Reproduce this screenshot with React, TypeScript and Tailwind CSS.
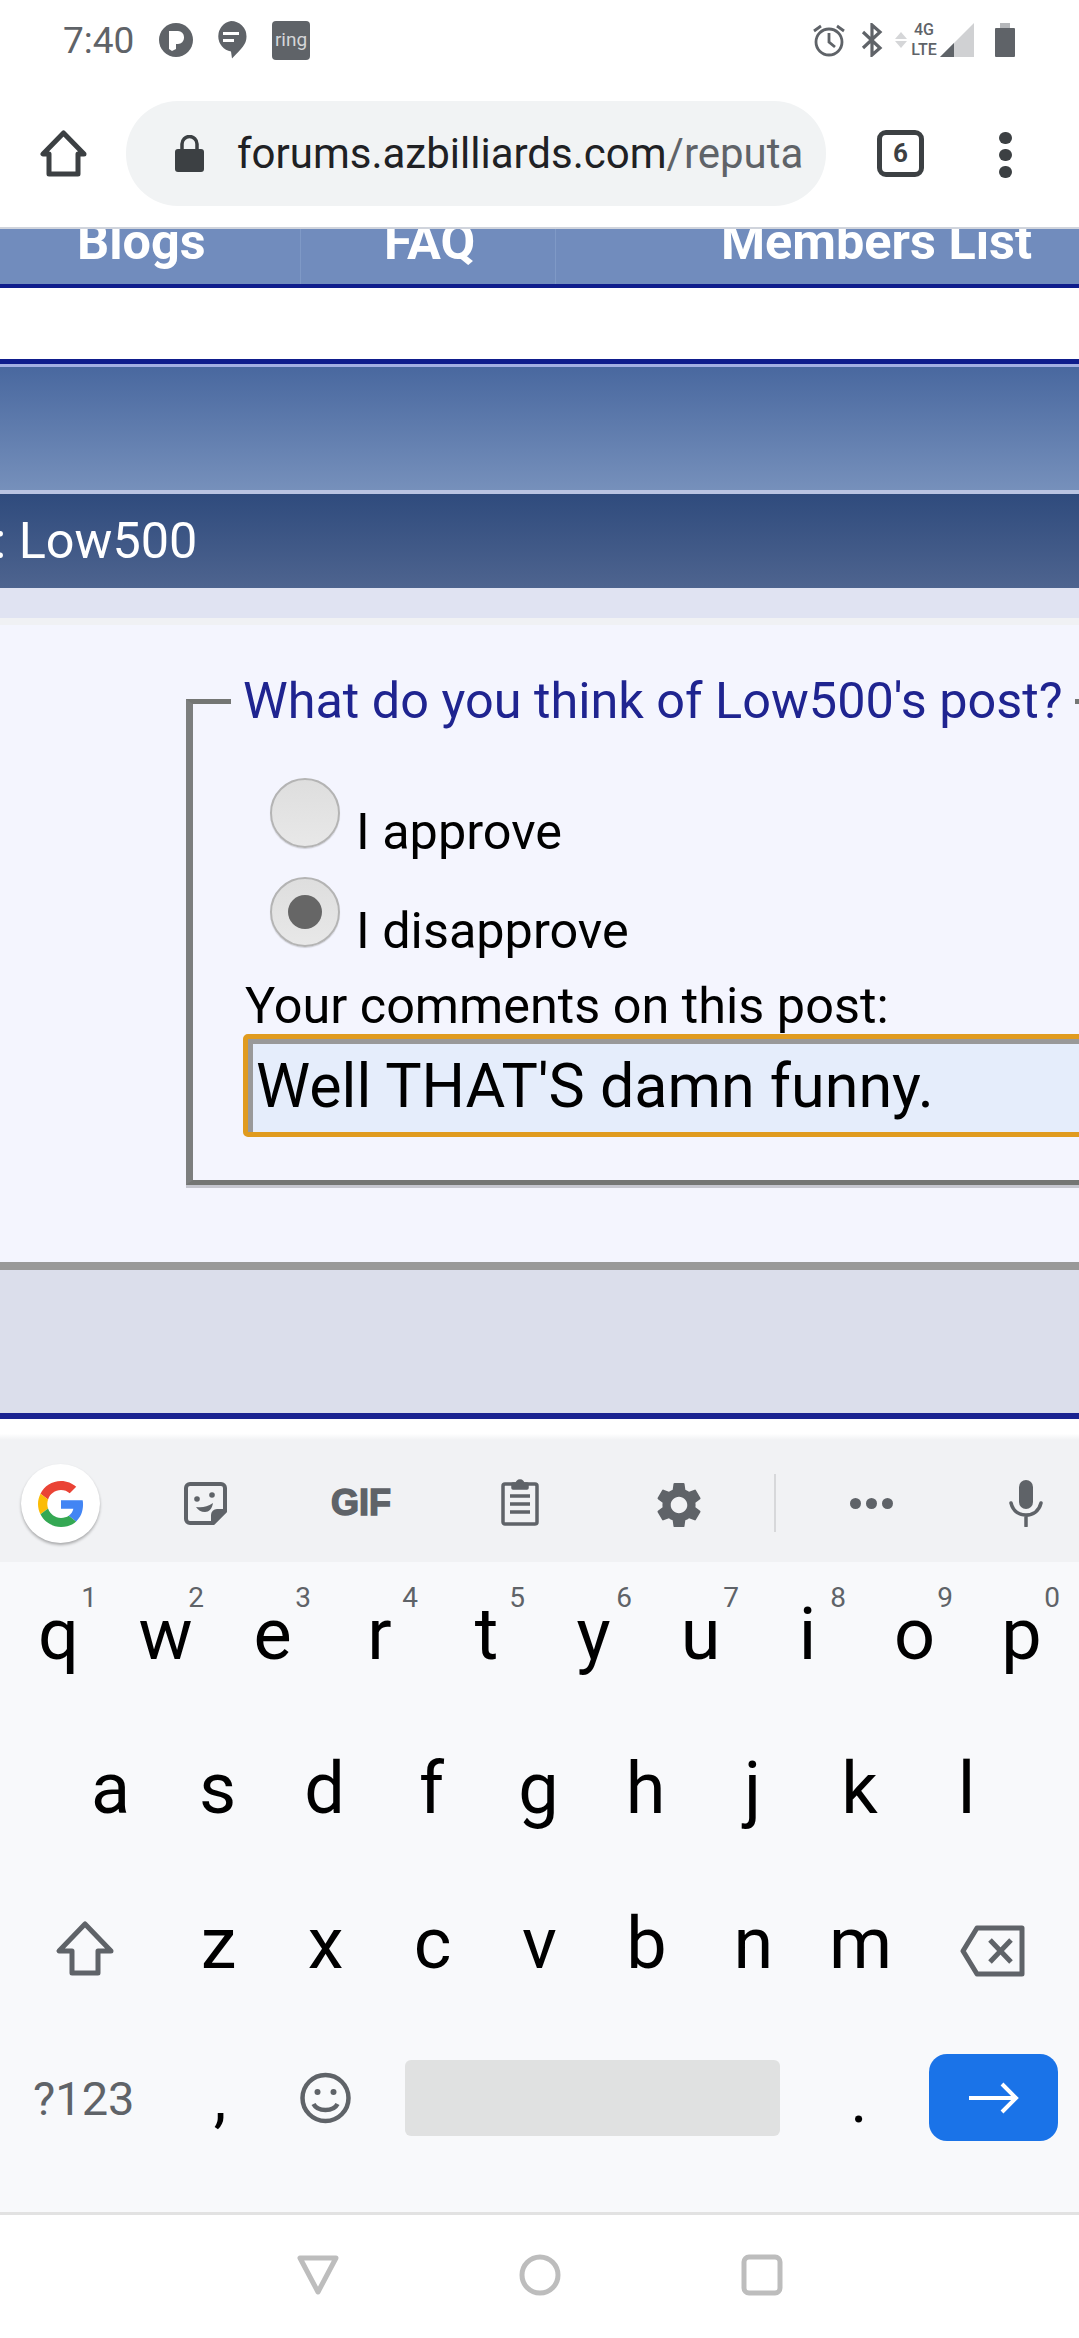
const sans = "font-['Liberation_Sans',Arial,sans-serif]"
const roboto = "font-['Roboto',sans-serif]"

const topRow = [
  ["q", "1"], ["w", "2"], ["e", "3"], ["r", "4"], ["t", "5"],
  ["y", "6"], ["u", "7"], ["i", "8"], ["o", "9"], ["p", "0"],
]
const midRow = ["a", "s", "d", "f", "g", "h", "j", "k", "l"]
const lowRow = ["z", "x", "c", "v", "b", "n", "m"]

function StatusBar() {
  return (
    <div className="h-[90px] flex items-center justify-between pl-[63px] pr-[64px] pb-[10px] text-[#5f6368]">
      <div className="flex items-center">
        <span className={`${roboto} text-[37px] leading-none w-[96px]`}>7:40</span>
        <svg viewBox="0 0 34 34" className="w-[34px] h-[34px]">
          <circle cx="17" cy="17" r="17" fill="#5f6368" />
          <path d="M10 8h9a6 6 0 0 1 6 6v1a6 6 0 0 1-6 6h-2v5l-4 2-3-2z" fill="#fff" />
        </svg>
        <svg viewBox="0 0 32 38" className="w-[32px] h-[38px] ml-[22px]">
          <path d="M16 0a15.500 15.500 0 0 1 15.500 15.500c0 8-5 12-14.500 22l-1-7A15.500 15.500 0 0 1 16 0z" fill="#5f6368" />
          <rect x="8" y="11" width="16" height="3" fill="#fff" />
          <rect x="8" y="18" width="11" height="3" fill="#fff" />
        </svg>
        <span className={`${roboto} ml-[25px] w-[38px] h-[39px] rounded-[4px] bg-[#5f6368] text-[#d5d6d8] text-[19px] flex items-center justify-center`}>
          ring
        </span>
      </div>
      <div className="flex items-center">
        <svg viewBox="0 0 34 34" fill="none" stroke="#5f6368" strokeWidth="2.800" className="w-[34px] h-[34px]">
          <circle cx="17" cy="19" r="13" />
          <path d="M17 10v9l6 5M2 8l7-5M32 8l-7-5" />
        </svg>
        <svg viewBox="0 0 22 34" fill="none" stroke="#5f6368" strokeWidth="3.200" className="w-[22px] h-[34px] ml-[15px]">
          <path d="M2 9l17 16-8 7V2l8 7L2 25" />
        </svg>
        <svg viewBox="0 0 12 16" className="w-[12px] h-[16px] ml-[12px]">
          <path d="M6 0l6 7H0z" fill="#d5d6d8" />
          <path d="M6 16l6-7H0z" fill="#d5d6d8" />
        </svg>
        <div className={`${roboto} ml-[4px] w-[26px] text-[16px] leading-[20px] font-medium text-center`}>
          <div>4G</div>
          <div>LTE</div>
        </div>
        <svg viewBox="0 0 34 34" className="w-[34px] h-[34px] ml-[3px]">
          <path d="M34 0v34H0z" fill="#d0d1d3" />
          <path d="M14 20v14H0z" fill="#5f6368" />
        </svg>
        <svg viewBox="0 0 20 34" className="w-[20px] h-[34px] ml-[21px]">
          <rect x="5" y="0" width="10" height="5" fill="#b5b7ba" />
          <rect x="0" y="5" width="20" height="29" rx="1" fill="#5f6368" />
        </svg>
      </div>
    </div>
  )
}

function BrowserBar() {
  return (
    <div className="h-[137px] flex items-start pl-[40px]">
      <svg viewBox="0 0 47 47" fill="none" stroke="#3c4043" strokeWidth="5" strokeLinejoin="round" className="w-[47px] h-[47px] mt-[40px]">
        <path d="M23.500 3L3 24h6v20h29V24h6z" />
      </svg>
      <div className="w-[700px] h-[105px] ml-[39px] mt-[11px] rounded-[52px] bg-[#f1f3f4] flex items-center pl-[49px]">
        <svg viewBox="0 0 29 37" className="w-[29px] h-[37px]">
          <path d="M7 15V9a7.500 7.500 0 0 1 15 0v6" fill="none" stroke="#3c4043" strokeWidth="3.500" />
          <rect x="0" y="14" width="29" height="23" rx="3" fill="#3c4043" />
        </svg>
        <span className={`${roboto} ml-[33px] text-[42px] leading-none text-[#202124] whitespace-nowrap`}>
          forums.azbilliards.com<span className="text-[#5f6368]">/reputa</span>
        </span>
      </div>
      <div className={`${roboto} ml-[51px] mt-[40px] w-[47px] h-[47px] rounded-[9px] border-[5px] border-[#3c4043] flex items-center justify-center text-[26px] font-bold text-[#3c4043]`}>
        6
      </div>
      <div className="ml-[75px] mt-[42px] flex flex-col gap-[5px]">
        <span className="w-[13px] h-[12px] rounded-full bg-[#3c4043]" />
        <span className="w-[13px] h-[12px] rounded-full bg-[#3c4043]" />
        <span className="w-[13px] h-[12px] rounded-full bg-[#3c4043]" />
      </div>
    </div>
  )
}

function Radio({ checked, label }: { checked?: boolean; label: string }) {
  return (
    <div className="flex items-end h-[99px] pl-[77px]">
      <div className="mb-[11px] w-[70px] h-[70px] rounded-full border-2 border-[#b4b4b4] bg-gradient-to-b from-[#dedede] to-[#e8e8e8] shadow-[0_1px_1px_rgba(0,0,0,0.15)] flex items-center justify-center">
        {checked && <span className="w-[34px] h-[34px] rounded-full bg-[#666666]" />}
      </div>
      <span className="ml-[16px] text-[50.400px] leading-[54px] text-black">{label}</span>
    </div>
  )
}

function Forum() {
  return (
    <div className={`${roboto} overflow-hidden`}>
      {/* Clipped tab row of the forum's nav */}
      <div className="h-[61px] overflow-hidden border-t-2 border-[#d0d4dc] border-b-[4px] border-b-[#0f1d8c] bg-[#718cbd] flex text-white font-bold text-[50.400px] leading-none">
        <div className="w-[301px] pl-[77px] border-r border-[#7f99c6]">
          <div className="-mt-[12px]">Blogs</div>
        </div>
        <div className="w-[255px] pl-[83px] border-r border-[#7f99c6]">
          <div className="-mt-[12px]">FAQ</div>
        </div>
        <div className="pl-[165px] whitespace-nowrap">
          <div className="-mt-[12px]">Members List</div>
        </div>
      </div>
      <div className="h-[71px] bg-white" />
      <div className="h-[5px] bg-[#0f1d8c]" />
      <div className="h-[3px] bg-[#a3b0e3]" />
      <div className="h-[123px] bg-gradient-to-b from-[#49689f] to-[#7690bb]" />
      <div className="h-[4px] bg-[#b9c4e2]" />
      <div className="h-[94px] bg-gradient-to-b from-[#2f4b7d] to-[#4e648f] flex items-center text-white text-[50.400px] whitespace-nowrap -ml-[6px]">
        : Low500
      </div>
      <div className="h-[30px] bg-[#e0e3f2]" />
      <div className="h-[644px] bg-[#f4f5fe] border-t-[7px] border-[#f0f1f4] pt-[49px] pl-[186px]">
        <fieldset className="w-[1100px] h-[511px] border-[5px] border-l-[7px] border-[#747674] border-l-[#7c7e7e] shadow-[0_3px_0_#c5c6cf]">
          <legend className="ml-[38px] text-[50.400px] leading-[54px] text-[#1f2490] whitespace-nowrap px-[12px]">
            What do you think of Low500's post?
          </legend>
          <div className="pt-[32px]">
            <Radio label="I approve" />
            <Radio checked label="I disapprove" />
            <div className="pl-[52px] mt-[21px] text-[50.400px] leading-[54px] text-black">Your comments on this post:</div>
            <div className="ml-[50px] mt-[1px] h-[103px] w-[1000px] rounded-[5px] border-[5px] border-[#e09b1f] bg-[#e5edfb]">
              <div className="h-full border-t-[5px] border-l-[5px] border-t-[#999999] border-l-[#999999] pl-[3px] pt-[7px] text-[61px] leading-[70px] text-black">
                Well THAT'S damn funny.
              </div>
            </div>
          </div>
        </fieldset>
      </div>
      <div className="h-[8px] bg-[#999999]" />
      <div className="h-[143px] bg-[#dbdeeb]" />
      <div className="h-[6px] bg-[#1a2390]" />
      <div className="h-[21px] bg-gradient-to-b from-white from-70% to-[#f1f2f4]" />
    </div>
  )
}

function KeyboardTools() {
  return (
    <div className="h-[122px] bg-[#f1f2f4] flex items-start">
      <div className="ml-[21px] mt-[24px] w-[79px] h-[79px] rounded-full bg-white shadow-[0_2px_3px_rgba(0,0,0,0.3)] flex items-center justify-center">
        <svg viewBox="0 0 48 48" className="w-[46px] h-[46px]">
          <path fill="#ea4335" d="M24 9.500c3.500 0 6.700 1.300 9.100 3.400l6.800-6.800C35.800 2.400 30.200 0 24 0 14.600 0 6.500 5.400 2.600 13.200l7.900 6.100C12.400 13.600 17.700 9.500 24 9.500z" />
          <path fill="#4285f4" d="M47 24.500c0-1.600-.1-3.100-.4-4.500H24v9h12.900c-.6 3-2.300 5.500-4.800 7.200l7.700 6C44.300 38 47 31.900 47 24.500z" />
          <path fill="#fbbc05" d="M10.500 28.700c-.5-1.400-.8-3-.8-4.700s.3-3.300.8-4.700l-7.900-6.100C1 16.400 0 20.100 0 24s1 7.600 2.600 10.800z" />
          <path fill="#34a853" d="M24 48c6.500 0 11.900-2.100 15.800-5.800l-7.700-6c-2.100 1.400-4.900 2.300-8.100 2.300-6.300 0-11.600-4.100-13.500-9.800l-7.900 6.100C6.500 42.600 14.600 48 24 48z" />
        </svg>
      </div>
      <svg viewBox="0 0 43 43" fill="none" stroke="#5f6368" strokeWidth="4" strokeLinejoin="round" className="w-[43px] h-[43px] ml-[84px] mt-[42px]">
        <path d="M6 2h31a4 4 0 0 1 4 4v23L29 41H6a4 4 0 0 1-4-4V6a4 4 0 0 1 4-4z" />
        <path d="M29 41V33a4 4 0 0 1 4-4h8z" fill="#5f6368" />
        <circle cx="13" cy="17" r="2.800" fill="#5f6368" stroke="none" />
        <circle cx="28" cy="13" r="2.800" fill="#5f6368" stroke="none" />
        <path d="M12 25c6 1 11 0 17-4-1 6-4 9-8 9s-7-2-9-5z" fill="#5f6368" stroke="none" />
      </svg>
      <span className={`${sans} ml-[104px] mt-[50px] text-[#5f6368] text-[36px] leading-[26px] font-bold [-webkit-text-stroke:1.5px_#5f6368]`}>GIF</span>
      <svg viewBox="0 0 38 49" fill="none" stroke="#5f6368" strokeWidth="3.500" strokeLinejoin="round" className="w-[38px] h-[49px] ml-[110px] mt-[37px]">
        <rect x="2" y="7" width="34" height="40" rx="2" />
        <path d="M12 7h4a3 3 0 0 1 6 0h4v4H12z" fill="#5f6368" />
        <path d="M9 19h20M9 27h20M9 35h20" />
      </svg>
      <svg viewBox="2.500 2 19 20" fill="#5f6368" className="w-[44px] h-[46px] ml-[118px] mt-[42px]">
        <path d="M19.140 12.940c.04-.3.06-.61.06-.94 0-.32-.02-.64-.07-.94l2.030-1.580a.49.49 0 0 0 .12-.61l-1.920-3.320a.488.488 0 0 0-.59-.22l-2.390.96c-.5-.38-1.030-.7-1.620-.94l-.36-2.540a.484.484 0 0 0-.48-.41h-3.840c-.24 0-.43.17-.47.41l-.36 2.540c-.59.24-1.130.57-1.620.94l-2.390-.96c-.22-.08-.47 0-.59.22L2.740 8.870c-.12.21-.08.47.12.61l2.030 1.580c-.05.3-.09.63-.09.94s.02.64.07.94l-2.030 1.580a.49.49 0 0 0-.12.61l1.920 3.320c.12.22.37.29.59.22l2.390-.96c.5.38 1.030.7 1.620.94l.36 2.540c.05.24.24.41.48.41h3.840c.24 0 .44-.17.47-.41l.36-2.540c.59-.24 1.130-.56 1.620-.94l2.390.96c.22.08.47 0 .59-.22l1.920-3.320c.12-.22.07-.47-.12-.61l-2.010-1.580zM12 15.600c-1.980 0-3.600-1.620-3.600-3.600s1.620-3.600 3.600-3.600 3.600 1.620 3.600 3.600-1.620 3.600-3.600 3.600z" />
      </svg>
      <div className="w-[2px] h-[58px] bg-[#d7d8da] ml-[73px] mt-[34px]" />
      <div className="ml-[74px] mt-[58px] flex gap-[5px]">
        <span className="w-[11px] h-[11px] rounded-full bg-[#5f6368]" />
        <span className="w-[11px] h-[11px] rounded-full bg-[#5f6368]" />
        <span className="w-[11px] h-[11px] rounded-full bg-[#5f6368]" />
      </div>
      <svg viewBox="0 0 34 47" className="w-[34px] h-[47px] ml-[116px] mt-[40px]">
        <rect x="10" y="0" width="14" height="29" rx="7" fill="#5f6368" />
        <path d="M2 23c2 8 8 12 15 12s13-4 15-12M17 35v11" fill="none" stroke="#5f6368" strokeWidth="3.500" strokeLinecap="round" />
      </svg>
    </div>
  )
}

function Keyboard() {
  return (
    <div className={`${roboto} h-[650px] bg-[#f8f9fb] text-black`}>
      <div className="flex h-[155px] pl-[5px]">
        {topRow.map(([k, n]) => (
          <div key={k} className="relative w-[107px] flex justify-center pt-[35px] text-[72px] leading-[76px]">
            {k}
            <span className="absolute right-[15px] top-[20px] text-[28px] leading-[32px] text-[#5f6368]">{n}</span>
          </div>
        ))}
      </div>
      <div className="flex h-[155px] pl-[57px]">
        {midRow.map((k) => (
          <div key={k} className="w-[107px] flex justify-center pt-[34px] text-[72px] leading-[76px]">
            {k}
          </div>
        ))}
      </div>
      <div className="flex items-start h-[155px]">
        <div className="w-[165px] pl-[55px] pt-[48px]">
          <svg viewBox="0 0 60 56" fill="none" stroke="#5f6368" strokeWidth="5" strokeLinejoin="round" className="w-[60px] h-[56px]">
            <path d="M30 4L4 31h13v22h26V31h13z" />
          </svg>
        </div>
        {lowRow.map((k) => (
          <div key={k} className="w-[107px] flex justify-center pt-[34px] text-[72px] leading-[76px]">
            {k}
          </div>
        ))}
        <svg viewBox="0 0 65 52" fill="none" stroke="#5f6368" strokeWidth="5" strokeLinejoin="round" className="w-[65px] h-[52px] ml-[46px] mt-[53px]">
          <path d="M17 3h45v46H17L3 26zM30 15l21 22M51 15L30 37" />
        </svg>
      </div>
      <div className="flex items-start pl-[33px]">
        <span className="w-[159px] mt-[45px] text-[47px] leading-[54px] text-[#5f6368]">?123</span>
        <span className="w-[56px] text-center mt-[38px] text-[64px] leading-[68px] text-black">,</span>
        <svg viewBox="0 0 52 52" fill="none" stroke="#5f6368" strokeWidth="4.500" className="w-[53px] h-[52px] ml-[51px] mt-[45px]">
          <circle cx="26" cy="26" r="23" />
          <circle cx="18" cy="20" r="3" fill="#5f6368" stroke="none" />
          <circle cx="34" cy="20" r="3" fill="#5f6368" stroke="none" />
          <path d="M14 32c4 8 20 8 24 0" />
        </svg>
        <div className="w-[375px] h-[76px] ml-[53px] mt-[33px] rounded-[6px] bg-[#e0e1e1]" />
        <span className="w-[149px] pl-[9px] text-center mt-[40px] text-[64px] leading-[68px] text-black">.</span>
        <div className="w-[129px] h-[87px] mt-[27px] rounded-[18px] bg-[#1a73e8] flex items-center justify-center">
          <svg viewBox="0 0 50 32" fill="none" stroke="#fff" strokeWidth="4" className="w-[50px] h-[32px]">
            <path d="M0 16h47M33 2l14 14-14 14" />
          </svg>
        </div>
      </div>
    </div>
  )
}

function NavBar() {
  return (
    <div className="h-[123px] border-t-[3px] border-[#e2e2e2] bg-white flex items-start justify-center pt-[39px] gap-[180px] pl-[1px]">
      <svg viewBox="0 0 42 42" fill="none" stroke="#bdbdbd" strokeWidth="5" strokeLinejoin="round" className="w-[42px] h-[42px]">
        <path d="M3 4h36L21 38z" />
      </svg>
      <svg viewBox="0 0 42 42" fill="none" stroke="#bdbdbd" strokeWidth="5" className="w-[42px] h-[42px]">
        <circle cx="21" cy="21" r="18" />
      </svg>
      <svg viewBox="0 0 42 42" fill="none" stroke="#bdbdbd" strokeWidth="5" className="w-[42px] h-[42px]">
        <rect x="3" y="3" width="36" height="36" rx="5" />
      </svg>
    </div>
  )
}

export default function App() {
  return (
    <div className="w-[1079px] h-[2338px] bg-white overflow-hidden">
      <StatusBar />
      <BrowserBar />
      <Forum />
      <KeyboardTools />
      <Keyboard />
      <NavBar />
    </div>
  )
}
